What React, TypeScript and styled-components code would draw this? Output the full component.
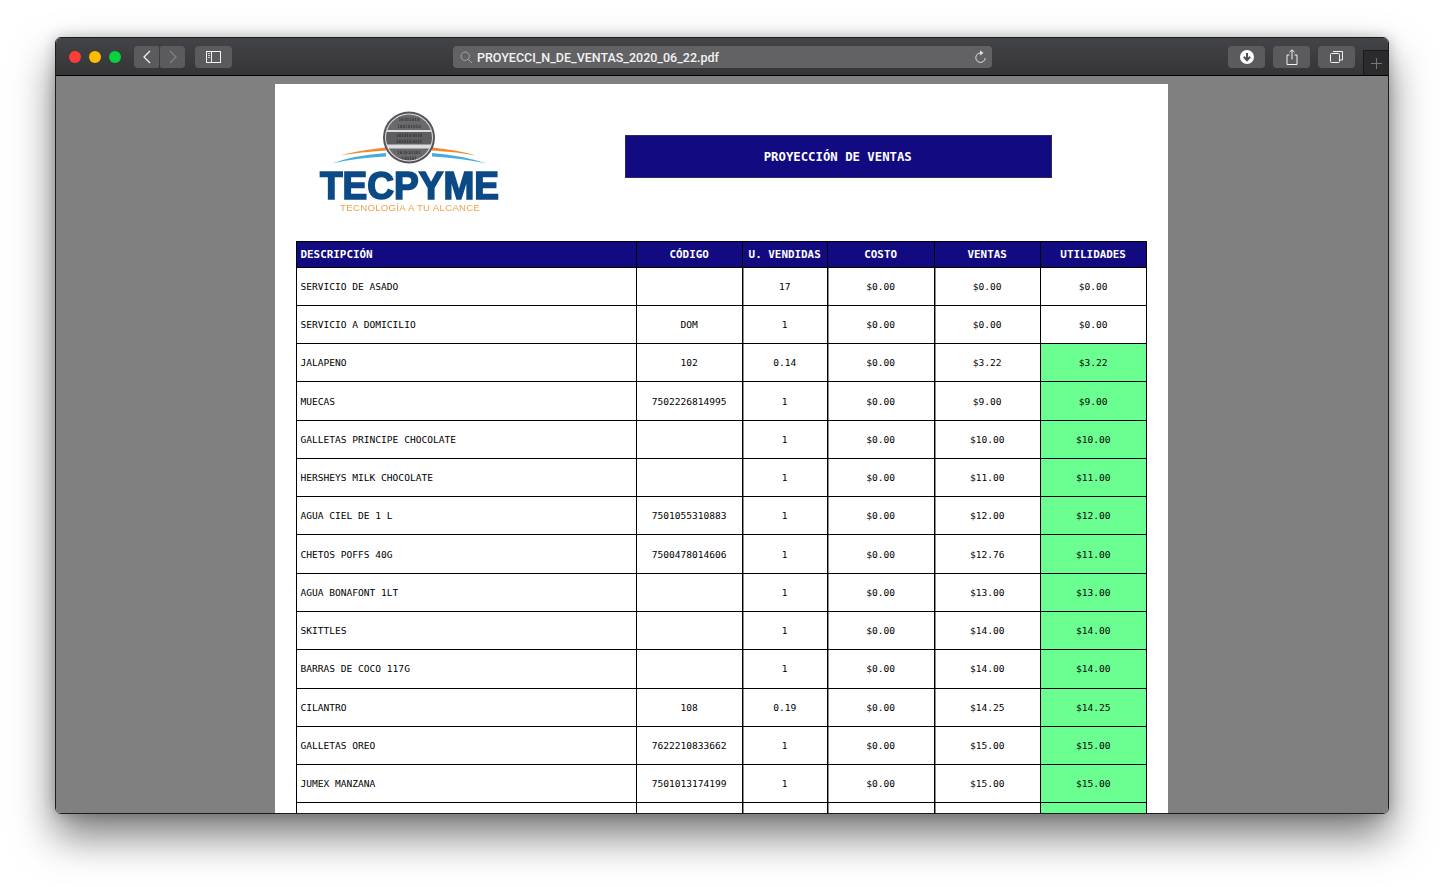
import React from "react";
import styled, { createGlobalStyle } from "styled-components";

const Global = createGlobalStyle`
  html, body { margin: 0; padding: 0; background: #fff; }
  body { width: 1444px; height: 887px; overflow: hidden; }
`;
const Desktop = styled.div`
  box-sizing: border-box;
  width: 1444px;
  height: 887px;
  padding: 37px 55px 73px;
  background: #fff;
`;
const Win = styled.div`
  box-sizing: border-box;
  height: 777px;
  display: flex;
  flex-direction: column;
  border: 1px solid #1c1c1e;
  border-radius: 6px;
  overflow: hidden;
  box-shadow: 0 22px 42px rgba(0, 0, 0, 0.52), 0 0 14px rgba(0, 0, 0, 0.22);
`;
const Toolbar = styled.div`
  box-sizing: border-box;
  flex: none;
  height: 38px;
  display: flex;
  align-items: flex-start;
  padding: 8px 0 0 13px;
  background: linear-gradient(#434447, #353537);
  border-bottom: 1px solid #000;
  position: relative;
`;
const Light = styled.span<{ $c: string }>`
  width: 12px;
  height: 12px;
  margin: 5px 8px 0 0;
  border-radius: 50%;
  background: ${(p) => p.$c};
`;
const TBtn = styled.div<{ $w: number; $ml?: number; $r?: string }>`
  box-sizing: border-box;
  width: ${(p) => p.$w}px;
  height: 22px;
  margin-left: ${(p) => p.$ml ?? 0}px;
  border-radius: ${(p) => p.$r ?? "4px"};
  background: #5b5b5e;
  display: flex;
  align-items: center;
  justify-content: center;
  flex: none;
`;
const UrlBar = styled.div`
  box-sizing: border-box;
  flex: none;
  width: 539px;
  height: 22px;
  margin-left: 221px;
  padding: 0 5px 0 7px;
  border-radius: 4px;
  background: #626265;
  display: flex;
  align-items: center;
  color: #f2f2f2;
  font: 500 12.5px Roboto, "Liberation Sans", Arial, sans-serif;
`;
const UrlText = styled.span`
  margin-left: 4px;
  flex: 1;
  white-space: nowrap;
`;
const NewTab = styled.div`
  box-sizing: border-box;
  position: absolute;
  right: 0;
  bottom: 0;
  width: 25px;
  height: 25px;
  background: #2b2b2d;
  border: 1px solid #1a1a1b;
  border-width: 1px 0 0 1px;
  display: flex;
  align-items: center;
  justify-content: center;
`;
const Viewer = styled.div`
  flex: 1;
  min-height: 0;
  overflow: hidden;
  background: #808080;
  padding-top: 8px;
`;
const Page = styled.div`
  width: 893px;
  margin-left: 219px;
  background: #fff;
  padding-bottom: 200px;
`;
const DocHead = styled.div`
  box-sizing: border-box;
  height: 157px;
  display: flex;
  align-items: flex-start;
  padding: 16px 0 0 25px;
`;
const Banner = styled.div`
  box-sizing: border-box;
  width: 426.5px;
  height: 43px;
  margin: 35px 0 0 105px;
  padding-right: 1px;
  background: #120a80;
  border: 1px solid #2a2a5c;
  color: #fff;
  font: bold 12.3px "DejaVu Sans Mono", monospace;
  display: flex;
  align-items: center;
  justify-content: center;
`;
const Sheet = styled.div`
  width: 851px;
  margin-left: 21px;
  box-sizing: border-box;
  border-left: 1px solid #000;
  border-top: 1px solid #000;
  font-family: "DejaVu Sans Mono", monospace;
`;
const Row = styled.div<{ $head?: boolean }>`
  display: grid;
  grid-template-columns: 340px 106px 85px 107px 106px 106px;
  height: ${(p) => (p.$head ? "25.6px" : "38.27px")};
  box-sizing: border-box;
`;
const Cell = styled.div<{ $left?: boolean; $head?: boolean; $green?: boolean; $seam?: boolean }>`
  box-sizing: border-box;
  border-right: 1px solid #000;
  border-bottom: 1px solid #000;
  display: flex;
  align-items: center;
  white-space: nowrap;
  justify-content: ${(p) => (p.$left ? "flex-start" : "center")};
  padding: ${(p) => (p.$left ? "0 0 0 3.5px" : "0 0.7px 0 0")};
  color: ${(p) => (p.$head ? "#fff" : "#000")};
  background: ${(p) => (p.$head ? "#120a80" : p.$green ? "#6bff92" : "#fff")};
  font-size: ${(p) => (p.$head ? "10.9px" : "9.57px")};
  font-weight: ${(p) => (p.$head ? 700 : 400)};
  box-shadow: ${(p) => (p.$seam ? "inset 1px 0 0 #8a8a8a" : "none")};
`;

const rows: [string, string, string, string, string, boolean][] = [
  ["SERVICIO DE ASADO", "", "17", "$0.00", "$0.00", false],
  ["SERVICIO A DOMICILIO", "DOM", "1", "$0.00", "$0.00", false],
  ["JALAPENO", "102", "0.14", "$3.22", "$3.22", true],
  ["MUECAS", "7502226814995", "1", "$9.00", "$9.00", true],
  ["GALLETAS PRINCIPE CHOCOLATE", "", "1", "$10.00", "$10.00", true],
  ["HERSHEYS MILK CHOCOLATE", "", "1", "$11.00", "$11.00", true],
  ["AGUA CIEL DE 1 L", "7501055310883", "1", "$12.00", "$12.00", true],
  ["CHETOS POFFS 40G", "7500478014606", "1", "$12.76", "$11.00", true],
  ["AGUA BONAFONT 1LT", "", "1", "$13.00", "$13.00", true],
  ["SKITTLES", "", "1", "$14.00", "$14.00", true],
  ["BARRAS DE COCO 117G", "", "1", "$14.00", "$14.00", true],
  ["CILANTRO", "108", "0.19", "$14.25", "$14.25", true],
  ["GALLETAS OREO", "7622210833662", "1", "$15.00", "$15.00", true],
  ["JUMEX MANZANA", "7501013174199", "1", "$15.00", "$15.00", true],
];

const Logo = () => (
  <svg width="220" height="125" viewBox="0 0 220 125" style={{ flex: "none", filter: "blur(0.4px)" }}>
    <path d="M40 55.5 Q60 50 86 47.5 L86 50.5 Q60 52 40 55.5Z" fill="#ee8a2b" />
    <path d="M132 47.5 Q158 50 176 55.5 Q158 52 132 50.5Z" fill="#ee8a2b" />
    <path d="M32 63.5 Q55 55 86 53 L86 56.5 Q55 58 32 63.5Z" fill="#45ace0" />
    <path d="M132 53 Q160 55 187 63.5 Q160 58 132 56.5Z" fill="#45ace0" />
    <circle cx="109" cy="37.5" r="26" fill="#55555a" />
    <circle cx="109" cy="37.5" r="24" fill="#dcdcdc" />
    <clipPath id="disc"><circle cx="109" cy="37.5" r="23" /></clipPath>
    <g clipPath="url(#disc)">
      <rect x="84" y="14" width="50" height="16" fill="#6a6a6e" />
      <rect x="84" y="32" width="50" height="12.5" fill="#5e5e62" />
      <rect x="84" y="48.5" width="50" height="14" fill="#6a6a6e" />
      <g fill="#26262a" fontFamily="'DejaVu Sans Mono', monospace" fontSize="4.4" textAnchor="middle">
        <text x="109" y="20.5">10101010</text>
        <text x="109" y="27.5">100101010</text>
        <text x="109" y="37">1010101010</text>
        <text x="109" y="43">1010101011</text>
        <text x="109" y="53.5">101010101</text>
        <text x="109" y="60">010101</text>
      </g>
    </g>
    <text x="20" y="99" textLength="179" lengthAdjust="spacingAndGlyphs" fontFamily="'Liberation Sans', Arial, sans-serif" fontWeight="700" fontSize="39.5" fill="#0c4a85" stroke="#0c4a85" strokeWidth="1.7">TECPYME</text>
    <text x="40" y="111" textLength="140" lengthAdjust="spacing" fontFamily="'Liberation Sans', Arial, sans-serif" fontSize="9.6" fill="#f0a04c">TECNOLOGÍA A TU ALCANCE</text>
  </svg>
);

export default function App() {
  return (
    <>
      <Global />
      <Desktop>
        <Win>
          <Toolbar>
            <Light $c="#fc3d39" />
            <Light $c="#fdbc00" />
            <Light $c="#0ad13c" />
            <TBtn $w={25} $ml={5} $r="4px 2px 2px 4px">
              <svg width="10" height="14" viewBox="0 0 10 14"><path d="M8 1 L2 7 L8 13" fill="none" stroke="#f2f2f2" strokeWidth="1.3" /></svg>
            </TBtn>
            <TBtn $w={25} $ml={1} $r="2px 4px 4px 2px">
              <svg width="10" height="14" viewBox="0 0 10 14"><path d="M2 1 L8 7 L2 13" fill="none" stroke="#808083" strokeWidth="1.3" /></svg>
            </TBtn>
            <TBtn $w={37} $ml={10}>
              <svg width="16" height="12" viewBox="0 0 16 12">
                <rect x="0.5" y="0.5" width="14" height="11" fill="none" stroke="#f2f2f2" />
                <path d="M5.5 0.5 V11.5" stroke="#f2f2f2" />
                <path d="M2 2.5 H4 M2 4.5 H4 M2 6.5 H4" stroke="#d0d0d0" />
              </svg>
            </TBtn>
            <UrlBar>
              <svg width="13" height="13" viewBox="0 0 13 13" style={{ flex: "none" }}>
                <circle cx="5.2" cy="5.2" r="4.2" fill="none" stroke="#a5a5a7" />
                <path d="M8.3 8.3 L12 12" stroke="#a5a5a7" />
              </svg>
              <UrlText>PROYECCI_N_DE_VENTAS_2020_06_22.pdf</UrlText>
              <svg width="13" height="14" viewBox="0 0 13 14" style={{ flex: "none" }}>
                <path d="M6.5 3 A4.7 4.7 0 1 0 11.2 8" fill="none" stroke="#e0e0e0" strokeWidth="1" />
                <path d="M6 0.3 L9.5 3 L6 5.5Z" fill="#e0e0e0" />
              </svg>
            </UrlBar>
            <TBtn $w={37} $ml={236}>
              <svg width="14" height="14" viewBox="0 0 14 14">
                <circle cx="7" cy="7" r="7" fill="#fff" />
                <path d="M7 3 V9 M3.8 6.8 L7 10.2 L10.2 6.8" fill="none" stroke="#505053" strokeWidth="2" />
              </svg>
            </TBtn>
            <TBtn $w={37} $ml={8}>
              <svg width="12" height="16" viewBox="0 0 12 16">
                <path d="M3.5 6 H1 V15.5 H11 V6 H8.5" fill="none" stroke="#f2f2f2" />
                <path d="M6 10.5 V1 M3.5 3.2 L6 0.8 L8.5 3.2" fill="none" stroke="#f2f2f2" />
              </svg>
            </TBtn>
            <TBtn $w={37} $ml={8}>
              <svg width="13" height="12" viewBox="0 0 13 12">
                <rect x="0.5" y="2.5" width="9" height="9" rx="1" fill="none" stroke="#f2f2f2" />
                <path d="M3 0.5 H12.5 V9 H10" fill="none" stroke="#f2f2f2" />
              </svg>
            </TBtn>
            <NewTab>
              <svg width="11" height="11" viewBox="0 0 11 11"><path d="M5.5 0 V11 M0 5.5 H11" stroke="#77777a" /></svg>
            </NewTab>
          </Toolbar>
          <Viewer>
            <Page>
              <DocHead>
                <Logo />
                <Banner>PROYECCIÓN DE VENTAS</Banner>
              </DocHead>
              <Sheet>
                <Row $head>
                  <Cell $head $left>DESCRIPCIÓN</Cell>
                  <Cell $head>CÓDIGO</Cell>
                  <Cell $head>U. VENDIDAS</Cell>
                  <Cell $head>COSTO</Cell>
                  <Cell $head>VENTAS</Cell>
                  <Cell $head>UTILIDADES</Cell>
                </Row>
                {rows.map((r, i) => (
                  <Row key={i}>
                    <Cell $left>{r[0]}</Cell>
                    <Cell>{r[1]}</Cell>
                    <Cell $seam>{r[2]}</Cell>
                    <Cell $seam>$0.00</Cell>
                    <Cell $seam>{r[3]}</Cell>
                    <Cell $green={r[5]}>{i < 2 ? "$0.00" : r[4]}</Cell>
                  </Row>
                ))}
                <Row>
                  <Cell $left />
                  <Cell />
                  <Cell $seam />
                  <Cell $seam />
                  <Cell $seam />
                  <Cell $green />
                </Row>
              </Sheet>
            </Page>
          </Viewer>
        </Win>
      </Desktop>
    </>
  );
}
